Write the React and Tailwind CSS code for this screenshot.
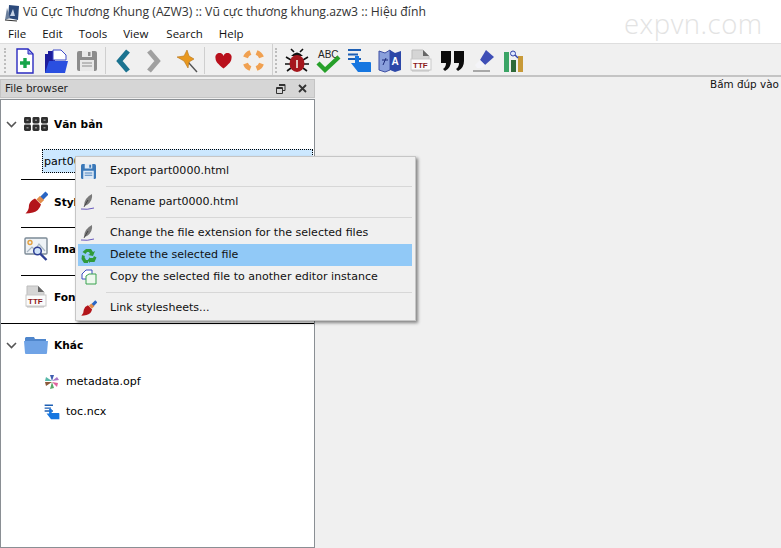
import React from "react";

const Ic = ({ w = 24, h = 24, vb = "0 0 24 24", className = "", children }) => (
  <svg width={w} height={h} viewBox={vb} className={`shrink-0 ${className}`}>
    {children}
  </svg>
);

const AppLogo = () => (
  <Ic w={16} h={18} vb="0 0 16 18">
    <path d="M5 1l10 1-1 14-10-2z" fill="#2c4a7c" />
    <path d="M3 4l3 10-5 2z" fill="#6b7f9c" />
    <path d="M6 12l3-7 2 7z" fill="#c7d3e6" />
    <path d="M1 16l12 1" stroke="#333" strokeWidth="1.2" />
  </Ic>
);

const NewFile = () => (
  <Ic w={20} h={26} vb="0 0 20 26">
    <path d="M2 1h11l5 5v19H2z" fill="#fff" stroke="#2a2ac0" strokeWidth="1.4" />
    <path d="M13 1v5h5z" fill="#9aa3ea" stroke="#2a2ac0" strokeWidth="1" />
    <path d="M10 10v10M5 15h10" stroke="#17a54a" strokeWidth="3.4" />
  </Ic>
);
const OpenFolder = () => (
  <Ic w={25} h={26} vb="0 0 25 26">
    <path d="M1 25V6h3V3h5v3h2v19z" fill="#1d1d9c" />
    <path d="M9 10V2h8l5 5v5H9z" fill="#fff" stroke="#3d4ac8" />
    <path d="M1 25l4-12h19l-3 12z" fill="#2a4fe0" />
  </Ic>
);
const SaveIcon = ({ w = 20, h = 24, c = "#8c8c8c", l = "#e8e8e8" }) => (
  <Ic w={w} h={h} vb="0 0 20 22" >
    <path d="M0 3q0-2 2-2h16q2 0 2 2v16q0 2-2 2H2q-2 0-2-2z" fill={c} />
    <rect x="5" y="1" width="10" height="6" fill={l} />
    <rect x="11" y="2" width="2.5" height="4" fill={c} />
    <rect x="3" y="10" width="14" height="11" fill={l} />
    <path d="M5 13h10M5 16h10" stroke={c} strokeWidth="1.2" />
  </Ic>
);
const Chevron = ({ dir = "left", c = "#1b7390" }) => (
  <Ic w={16} h={24} vb="0 0 16 24">
    <path
      d={dir === "left" ? "M13 2L4.500 12l8.500 10" : "M3 2l8.500 10L3 22"}
      fill="none"
      stroke={c}
      strokeWidth="5"
    />
  </Ic>
);
const Pin = () => (
  <Ic w={22} h={24} vb="0 0 22 24">
    <path d="M12 13l9 10" stroke="#555" strokeWidth="1.4" />
    <path d="M1 8l7-1 3-6 2 6 5 3-5 3-1 6-4-7z" fill="#e8981f" stroke="#b77418" strokeWidth=".6" />
  </Ic>
);
const Heart = () => (
  <Ic w={17} h={16} vb="0 0 17 16">
    <path d="M8.500 15.500C3 11 .5 8.500.5 5A4 4 0 0 1 8.500 3 4 4 0 0 1 16.500 5c0 3.500-2.500 6-8 10.500z" fill="#b9101c" />
  </Ic>
);
const Lifesaver = () => (
  <Ic w={23} h={23} vb="0 0 23 23">
    <circle cx="11.500" cy="11.500" r="8.500" fill="none" stroke="#f4f0ea" strokeWidth="5" />
    <g fill="none" stroke="#f0a050" strokeWidth="5" transform="rotate(45 11.500 11.500)">
      <path d="M8 3.700a8.500 8.500 0 0 1 7 0" />
      <path d="M19.300 8a8.500 8.500 0 0 1 0 7" />
      <path d="M15 19.300a8.500 8.500 0 0 1-7 0" />
      <path d="M3.700 15a8.500 8.500 0 0 1 0-7" />
    </g>
  </Ic>
);
const Bug = () => (
  <Ic w={24} h={25} vb="0 0 24 25">
    <path d="M1 9l5 3M23 9l-5 3M0 16h5M24 16h-5M2 23l4-3M22 23l-4-3M6 1l3 3M18 1l-3 3" stroke="#111" strokeWidth="1.6" />
    <path d="M6 8q6-7 12 0z" fill="#111" />
    <ellipse cx="12" cy="15.500" rx="7.500" ry="8.500" fill="#a5171d" />
    <path d="M12 12v8" stroke="#e8d8d0" strokeWidth="1.8" />
  </Ic>
);
const AbcCheck = () => (
  <Ic w={25} h={26} vb="0 0 25 26">
    <text x="2" y="10" fontSize="10" fontFamily="'Liberation Sans', sans-serif" fill="#222">ABC</text>
    <path d="M2 15l7 7L23 9" fill="none" stroke="#27a02a" strokeWidth="4.400" />
  </Ic>
);
const TocIcon = ({ w = 25, h = 25 }) => (
  <Ic w={w} h={h} vb="0 0 25 25">
    <path d="M1 2h13M1 6.500h10M1 11h13" stroke="#1d5fb4" strokeWidth="2.200" />
    <path d="M4 15l4 0V8h4v6h11q1 0 1 1v9H11z" fill="#1676e0" />
  </Ic>
);
const BookIcon = () => (
  <Ic w={24} h={25} vb="0 0 24 25">
    <path d="M1 3l6 2 5-3v20l-5 2-6-2z" fill="#8aa0dc" stroke="#3d4fa4" />
    <path d="M12 2l5 3 6-2v19l-6 2-5-2z" fill="#2d48a8" />
    <path d="M5 17l3-7M4 12h6" stroke="#1d2b78" fill="none" />
    <text x="13.500" y="17" fontSize="10" fontWeight="700" fontFamily="'Liberation Sans', sans-serif" fill="#fff">A</text>
  </Ic>
);
const TtfIcon = () => (
  <Ic w={22} h={24} vb="0 0 22 24">
    <path d="M2 1h11l6 6v15H2z" fill="#d5d5d5" stroke="#bdbdbd" />
    <path d="M13 1l6 6h-6z" fill="#666" />
    <rect x="1" y="10" width="20" height="11" fill="#fbfbfb" stroke="#c9c9c9" />
    <text x="3" y="19" fontSize="8" fontWeight="700" fontFamily="'Liberation Sans', sans-serif" fill="#8c1a1a">TTF</text>
  </Ic>
);
const Quotes = () => (
  <Ic w={25} h={22} vb="0 0 25 22">
    <path d="M1 1h10v10q0 7-6 10l-2-2q3-2 3-6H1zM14 1h10v10q0 7-6 10l-2-2q3-2 3-6h-5z" fill="#0c0c0c" />
  </Ic>
);
const Eraser = () => (
  <Ic w={24} h={23} vb="0 0 24 23">
    <path d="M14 1l8 7-9 8-5-5z" fill="#3f4fb6" />
    <path d="M8 11l5 5-3 3H5l-2-3z" fill="#f4f4f8" />
    <path d="M1 22h17" stroke="#a8a8a8" strokeWidth="2" />
  </Ic>
);
const ChartIcon = () => (
  <Ic w={20} h={22} vb="0 0 20 22">
    <rect x="0" y="2" width="5" height="20" fill="#3aa465" />
    <rect x="7" y="10" width="5" height="12" fill="#2f6a3a" />
    <rect x="14" y="6" width="5" height="16" fill="#c89a38" />
    <circle cx="9" cy="3.500" r="2.500" fill="#dfe8ff" stroke="#3344aa" />
    <path d="M11 5l3 3" stroke="#3344aa" strokeWidth="1.4" />
  </Ic>
);
const Brush = ({ w = 23, h = 23 }) => (
  <Ic w={w} h={h} vb="0 0 23 23">
    <path d="M22 2l-6 6" stroke="#2a66c4" strokeWidth="4.400" />
    <path d="M17 7l-3.500 3.500" stroke="#e38d4a" strokeWidth="6" />
    <path d="M10 7.500l6 6Q14 20 8 21.500q-4 1-7.500 1 3.500-3 3.500-8.500Q5 9.500 10 7.500z" fill="#b3151a" />
  </Ic>
);
const ImageSearch = () => (
  <Ic w={25} h={25} vb="0 0 25 25">
    <rect x="1" y="1" width="22" height="16" rx="1" fill="#eef2f6" stroke="#7c8a96" strokeWidth="1.400" />
    <circle cx="6" cy="5.500" r="2" fill="none" stroke="#e3a040" strokeWidth="1.400" />
    <path d="M3 15l5-5 3 3 4-6 6 7" fill="none" stroke="#a8b6c2" strokeWidth="1.200" />
    <circle cx="13.500" cy="14" r="3.800" fill="#cfe2f8" stroke="#2d3f94" strokeWidth="1.500" />
    <path d="M16.500 17l6 6" stroke="#2d3f94" strokeWidth="2.400" />
  </Ic>
);
const Grid9 = () => (
  <Ic w={24} h={14} vb="0 0 24 14">
    {[0, 8.500, 17].map((x) =>
      [0, 7.500].map((y) => (
        <g key={`${x}-${y}`}>
          <rect x={x} y={y} width="7" height="6.500" rx="1.400" fill="#2f2f2f" />
          <rect x={x + 2.500} y={y + 2.500} width="2" height="1.500" fill="#8a8a8a" />
        </g>
      ))
    )}
  </Ic>
);
const Folder = () => (
  <Ic w={24} h={18} vb="0 0 24 18">
    <path d="M2 1h8l1 2h11v4H1V2z" fill="#4f86cc" />
    <path d="M0 5h24l-1 12q0 1-1 1H2q-1 0-1-1z" fill="#6fa3e6" />
  </Ic>
);
const Flower = () => (
  <Ic w={16} h={16} vb="0 0 16 16">
    <path d="M8 7L6 1h4z" fill="#3f5fb0" />
    <path d="M8 7l5-4 2 3z" fill="#a878c8" />
    <path d="M8 8l6 1-1 4z" fill="#e0629c" />
    <path d="M8 8l2 6-4 1z" fill="#5aa86a" />
    <path d="M8 8l-6 4-1-4z" fill="#8c5a3c" />
    <path d="M8 7L2 3 1 7z" fill="#56b8a8" />
  </Ic>
);
const Quill = () => (
  <Ic w={14} h={17} vb="0 0 14 17">
    <path d="M3 12Q3 4 11 0q1 7-5 11z" fill="#7a7a7a" />
    <path d="M3 13l4-7" stroke="#333" strokeWidth=".8" />
    <path d="M0 15q6 1 13-1" stroke="#5a48b8" fill="none" strokeWidth=".9" />
  </Ic>
);
const Recycle = () => (
  <Ic w={16} h={15} vb="0 0 16 15">
    <path d="M5 1h5l2 3 2-1-2 5-5-1 2-1-1-2H6L4.500 6 1.500 4z" fill="#2f9a3a" />
    <path d="M1 7l3 1-.5 1L5 12h2v3H3L.5 11z" fill="#2f9a3a" />
    <path d="M9 10h3l1-2 2.500 1.500L13.500 14H9v1l-2.500-2.500L9 9z" fill="#2f9a3a" />
  </Ic>
);
const CopyFile = () => (
  <Ic w={16} h={16} vb="0 0 16 16">
    <path d="M1 5l4-4h6v9H1z" fill="#fff" stroke="#3a4ec0" />
    <path d="M5 7l3-2h7v10H5z" fill="#eef8ee" stroke="#39a24e" />
  </Ic>
);

const Gripper = () => (
  <div className="w-[3px] h-[25px] border-l-2 border-dotted border-[#bdbdbd]" />
);
const ToolSep = () => <div className="w-px h-[27px] bg-[#cfcfcf]" />;

const TreeGroup = ({ icon, label, chevron }) => (
  <div className="flex items-center h-[24px] pl-[5px]">
    <div className="w-[16px] flex">
      {chevron && (
        <svg width="11" height="7" viewBox="0 0 11 7">
          <path d="M1 1l4.500 4.500L10 1" fill="none" stroke="#555" strokeWidth="1.600" />
        </svg>
      )}
    </div>
    <div className="w-[30px] flex justify-center -mr-[2px] -ml-[1px]">{icon}</div>
    <span className="ml-[5px] pt-[2px] font-bold text-[10.6px] text-black">{label}</span>
  </div>
);

const MenuItem = ({ icon, label, active }) => (
  <div className={`flex items-center h-[22px] ${active ? "bg-[#91c9f7]" : ""}`}>
    <div className="w-[32px] pl-[3px] flex shrink-0">{icon}</div>
    <span className="text-[11.05px] text-[#111] whitespace-nowrap">{label}</span>
  </div>
);
const MenuSep = () => <div className="h-px bg-[#d7d7d7] ml-[28px] my-[4px]" />;

export default function App() {
  return (
    <div className="relative w-[781px] h-[548px] overflow-hidden bg-[#f0f0f0] flex flex-col font-['DejaVu_Sans',sans-serif]">
      {/* title + menu */}
      <div className="bg-white h-[43px] shrink-0">
        <div className="flex items-center h-[25px] pl-[4px] gap-[3px] font-['Open_Sans',sans-serif] text-[12.2px] text-[#333] whitespace-nowrap">
          <AppLogo />
          <span>Vũ Cực Thương Khung (AZW3) :: Vũ cực thương khung.azw3 :: Hiệu đính</span>
        </div>
        <div className="flex items-center h-[18px] pl-[8px] gap-[16px] font-['Open_Sans',sans-serif] text-[11.5px] text-[#111]">
          <span>File</span>
          <span>Edit</span>
          <span>Tools</span>
          <span>View</span>
          <span className="ml-[2px]">Search</span>
          <span>Help</span>
        </div>
      </div>

      {/* toolbars */}
      <div className="h-[34px] shrink-0 bg-[#f0f0f0] border-t border-[#dedede] border-b-2 border-b-[#c4c4c4] flex items-center">
        <div className="flex items-center w-[272px] h-full pl-[4px] pt-[2px]">
          <Gripper />
          <div className="ml-[8px] flex"><NewFile /></div>
          <div className="ml-[9px] flex"><OpenFolder /></div>
          <div className="ml-[8px] flex"><SaveIcon /></div>
          <div className="ml-[8px] flex"><ToolSep /></div>
          <div className="ml-[9px] flex"><Chevron /></div>
          <div className="ml-[15px] flex"><Chevron dir="right" c="#a0a0a0" /></div>
          <div className="ml-[14px] flex"><Pin /></div>
          <div className="ml-[6px] flex"><ToolSep /></div>
          <div className="ml-[10px] flex"><Heart /></div>
          <div className="ml-[10px] flex"><Lifesaver /></div>
        </div>
        <div className="flex items-center h-full border-l border-[#d0d0d0] pl-[2px] pt-[2px]">
          <Gripper />
          <div className="ml-[7px] flex"><Bug /></div>
          <div className="ml-[7px] flex"><AbcCheck /></div>
          <div className="ml-[6px] flex"><TocIcon /></div>
          <div className="ml-[6px] flex"><BookIcon /></div>
          <div className="ml-[8px] flex"><TtfIcon /></div>
          <div className="ml-[8px] flex"><Quotes /></div>
          <div className="ml-[7px] flex"><Eraser /></div>
          <div className="ml-[8px] flex"><ChartIcon /></div>
        </div>
      </div>

      {/* body */}
      <div className="flex-1 flex min-h-0">
        <div className="w-[315px] shrink-0 flex flex-col pt-[2px]">
          <div className="h-[19px] bg-[#d6d6d6] border border-[#c4c4c4] flex items-center pl-[4px] pr-[4px] text-[10.5px] text-[#222] shrink-0">
            <span className="flex-1">File browser</span>
            <svg width="10" height="10" viewBox="0 0 10 10" className="mr-[12px]">
              <path d="M3 .5h6v6H7M.5 3.500h6v6h-6z" fill="none" stroke="#333" />
              <path d="M3 1.500h6M.5 4.500h6" stroke="#333" />
            </svg>
            <svg width="9" height="9" viewBox="0 0 9 9" className="mr-[3px]">
              <path d="M1 1l7 7M8 1L1 8" stroke="#333" strokeWidth="1.800" />
            </svg>
          </div>
          <div className="flex-1 mt-[1px] bg-white border border-[#8a8f94] pt-[12px] flex flex-col">
            <TreeGroup icon={<Grid9 />} label="Văn bản" chevron />
            <div className="ml-[41px] mr-[1px] mt-[13px] h-[24px] bg-[#cce8ff] border border-dotted border-black flex items-center pl-[1px] pt-[2px] text-[11.05px] text-black">
              part0000.html
            </div>
            <div className="h-px bg-black ml-[20px] mt-[6px]" />
            <div className="mt-[10px]"><TreeGroup icon={<Brush />} label="Styles" /></div>
            <div className="h-px bg-black ml-[20px] mt-[13px]" />
            <div className="mt-[9px]"><TreeGroup icon={<ImageSearch />} label="Images" /></div>
            <div className="h-px bg-black ml-[20px] mt-[14px]" />
            <div className="mt-[9px]"><TreeGroup icon={<TtfIcon />} label="Fonts" /></div>
            <div className="h-px bg-black mt-[14px]" />
            <div className="mt-[9px]"><TreeGroup icon={<Folder />} label="Khác" chevron /></div>
            <div className="flex items-center h-[30px] mt-[9px] pl-[43px] gap-[6px] pt-[2px] text-[11.05px] text-black">
              <Flower />
              metadata.opf
            </div>
            <div className="flex items-center h-[30px] pl-[43px] gap-[6px] pt-[2px] text-[11.05px] text-black">
              <TocIcon w={16} h={16} />
              toc.ncx
            </div>
          </div>
        </div>
        <div className="flex-1 min-w-0 overflow-hidden pl-[395px] text-[10.4px] text-[#111] whitespace-nowrap">
          Bấm đúp vào
        </div>
      </div>

      {/* watermark */}
      <div className="absolute left-[624px] top-[3px] font-['Open_Sans',sans-serif] font-light text-[27.5px] tracking-[0.5px] text-[#e3e3e3]">
        expvn.com
      </div>

      {/* context menu */}
      <div className="absolute left-[75px] top-[156px] w-[341px] h-[165px] bg-[#f0f0f0] border border-[#c6c6c6] shadow-[2px_2px_3px_rgba(0,0,0,0.45)] pl-[2px] pr-[3px] pt-[3px]">
        <MenuItem icon={<SaveIcon w={15} h={17} c="#3a78b8" l="#dfeaf6" />} label="Export part0000.html" />
        <MenuSep />
        <MenuItem icon={<Quill />} label="Rename part0000.html" />
        <MenuSep />
        <MenuItem icon={<Quill />} label="Change the file extension for the selected files" />
        <MenuItem icon={<Recycle />} label="Delete the selected file" active />
        <MenuItem icon={<CopyFile />} label="Copy the selected file to another editor instance" />
        <MenuSep />
        <MenuItem icon={<Brush w={16} h={16} />} label="Link stylesheets..." />
      </div>
    </div>
  );
}
